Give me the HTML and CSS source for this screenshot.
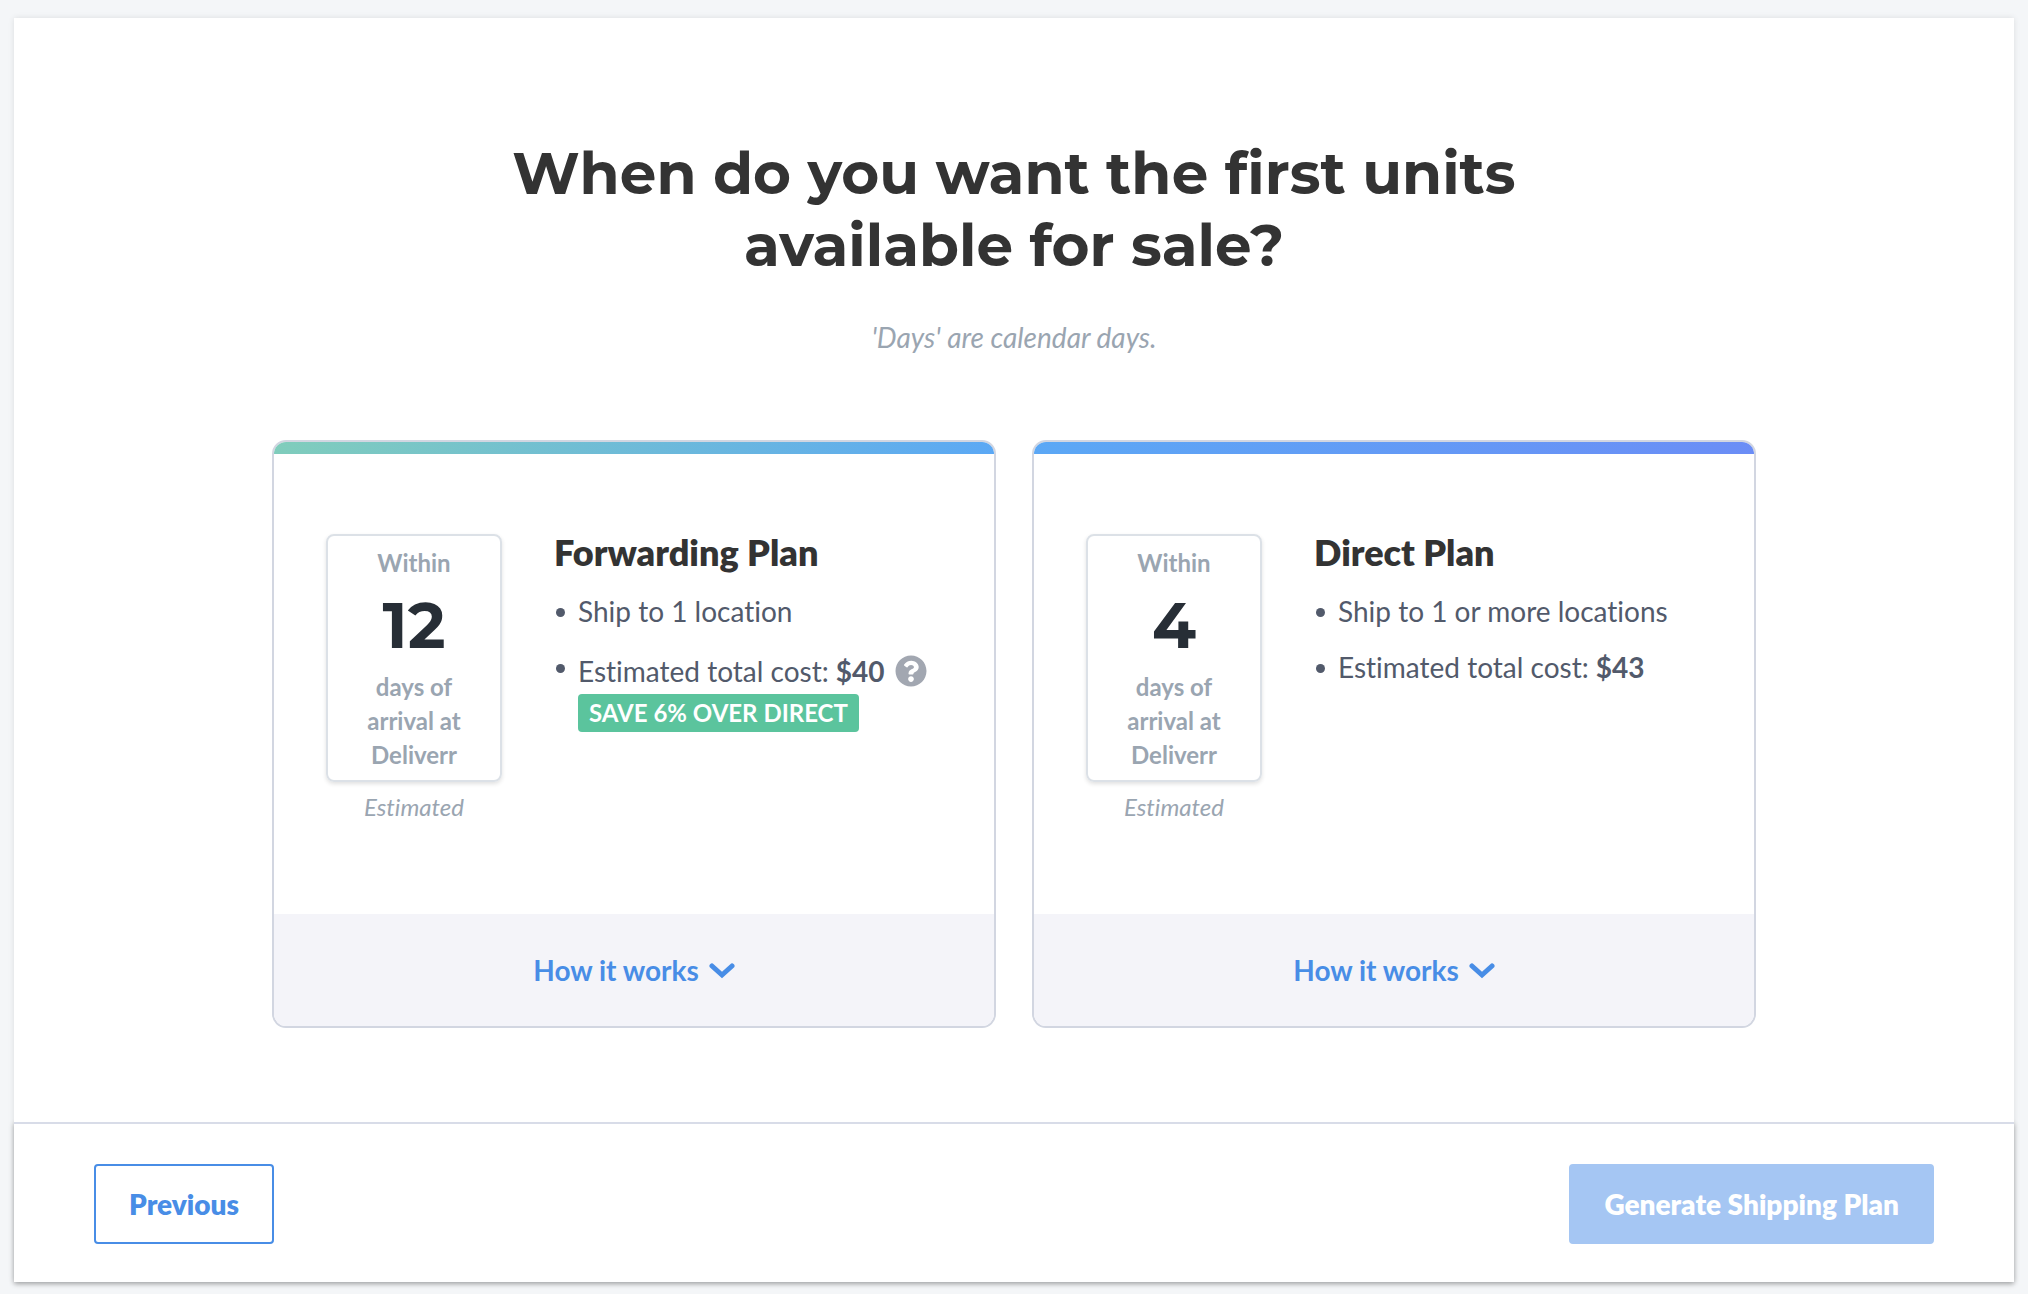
FILE: index.html
```html
<!DOCTYPE html>
<html lang="en">
<head>
  <meta charset="utf-8">
  <meta name="viewport" content="width=device-width, initial-scale=1">
  <title>Choose a shipping plan</title>
  <link rel="stylesheet" href="styles.css">
</head>
<body>
  <div class="panel">
    <main class="content">
      <h1 class="heading">When do you want the first units available for sale?</h1>
      <p class="subheading">'Days' are calendar days.</p>

      <div class="plans">
        <article class="plan plan--forwarding">
          <div class="plan__body">
            <div class="arrival">
              <div class="arrival__box">
                <span>Within</span>
                <strong class="arrival__days">12</strong>
                <span>days of arrival at Deliverr</span>
              </div>
              <em class="arrival__note">Estimated</em>
            </div>
            <div class="details">
              <h2 class="details__title">Forwarding Plan</h2>
              <ul class="details__list">
                <li>Ship to 1 location</li>
                <li>
                  <div>
                    <div class="cost">
                      <span>Estimated total cost: <b>$40</b></span>
                      <button class="help" type="button" aria-label="About this cost">
                        <svg viewBox="0 0 512 512" width="32" height="32" aria-hidden="true"><path fill="currentColor" d="M504 256c0 136.997-111.043 248-248 248S8 392.997 8 256C8 119.083 119.043 8 256 8s248 111.083 248 248zM262.655 90c-54.497 0-89.255 22.957-116.549 63.758-3.536 5.286-2.353 12.415 2.715 16.258l34.699 26.31c5.205 3.947 12.621 3.008 16.665-2.122 17.864-22.658 30.113-35.797 57.303-35.797 20.429 0 45.698 13.148 45.698 32.958 0 14.976-12.363 22.667-32.534 33.976C247.128 238.528 216 254.941 216 296v4c0 6.627 5.373 12 12 12h56c6.627 0 12-5.373 12-12v-1.333c0-28.462 83.186-29.647 83.186-106.667 0-58.002-60.165-102-116.531-102zM256 338c-25.365 0-46 20.635-46 46 0 25.364 20.635 46 46 46s46-20.636 46-46c0-25.365-20.635-46-46-46z"/></svg>
                      </button>
                    </div>
                    <span class="badge">SAVE 6% OVER DIRECT</span>
                  </div>
                </li>
              </ul>
            </div>
          </div>
          <button class="plan__toggle" type="button" aria-expanded="false">
            How it works
            <svg viewBox="0 0 26 24" width="26" height="24" aria-hidden="true"><path d="M3 8l10 9 10-9" fill="none" stroke="currentColor" stroke-width="5" stroke-linecap="round" stroke-linejoin="miter"/></svg>
          </button>
        </article>

        <article class="plan plan--direct">
          <div class="plan__body">
            <div class="arrival">
              <div class="arrival__box">
                <span>Within</span>
                <strong class="arrival__days">4</strong>
                <span>days of arrival at Deliverr</span>
              </div>
              <em class="arrival__note">Estimated</em>
            </div>
            <div class="details">
              <h2 class="details__title">Direct Plan</h2>
              <ul class="details__list">
                <li>Ship to 1 or more locations</li>
                <li><span>Estimated total cost: <b>$43</b></span></li>
              </ul>
            </div>
          </div>
          <button class="plan__toggle" type="button" aria-expanded="false">
            How it works
            <svg viewBox="0 0 26 24" width="26" height="24" aria-hidden="true"><path d="M3 8l10 9 10-9" fill="none" stroke="currentColor" stroke-width="5" stroke-linecap="round" stroke-linejoin="miter"/></svg>
          </button>
        </article>
      </div>
    </main>

    <footer class="actions">
      <button class="button button--outline" type="button">Previous</button>
      <button class="button button--primary" type="button" disabled>Generate Shipping Plan</button>
    </footer>
  </div>
</body>
</html>
```
FILE: styles.css
```css
*,
*::before {
  box-sizing: border-box;
}

body {
  margin: 0;
  min-height: 100vh;
  display: flex;
  padding: 18px 14px 12px;
  background: #f4f6f8;
  color: #525a6b;
  font: 28px/36px Lato, sans-serif;
  font-variant-ligatures: none;
}

h1,
h2,
p,
ul {
  margin: 0;
  padding: 0;
}

button {
  margin: 0;
  font-family: inherit;
  cursor: pointer;
}

.panel {
  flex: 1;
  display: flex;
  flex-direction: column;
  background: #fff;
  box-shadow: 0 0 6px rgba(0, 0, 0, 0.1);
}

.content {
  position: relative;
  z-index: 1;
  flex: 1;
  padding: 120px 80px 90px;
  background: #fff;
}

.heading {
  max-width: 1100px;
  margin: 0 auto 36px;
  color: #333;
  font-family: Montserrat, Inter, sans-serif;
  font-size: 58px;
  font-weight: 700;
  line-height: 72px;
  text-align: center;
}

.subheading {
  margin-bottom: 84px;
  color: #9aa5b1;
  font-style: italic;
  line-height: 38px;
  text-align: center;
}

.plans {
  display: grid;
  grid-template-columns: 1fr 1fr;
  gap: 36px;
  max-width: 1484px;
  margin: 0 auto;
}

.plan {
  display: flex;
  flex-direction: column;
  overflow: hidden;
  border: 2px solid #d2d6e1;
  border-radius: 14px;
}

.plan::before {
  content: "";
  height: 12px;
}

.plan--forwarding::before {
  background: linear-gradient(135deg, #80cdbb, #5ba8f5);
}

.plan--direct::before {
  background: linear-gradient(135deg, #5ba8f5, #6b8df6);
}

.plan__body {
  flex: 1;
  display: flex;
  gap: 52px;
  padding: 80px 52px 90px;
}

.arrival {
  flex: none;
  display: flex;
  flex-direction: column;
  gap: 8px;
  width: 176px;
  color: #9aa5b1;
  font-size: 24px;
  line-height: 34px;
  text-align: center;
}

.arrival__box {
  display: flex;
  flex-direction: column;
  padding: 10px 24px 8px;
  border: 2px solid #dce1e7;
  border-radius: 8px;
  box-shadow: 0 2px 4px rgba(0, 0, 0, 0.12);
  font-weight: 700;
}

.arrival__days {
  color: #272e36;
  font-family: Montserrat, Inter, sans-serif;
  font-size: 64px;
  font-weight: 700;
  line-height: 90px;
}

.details__title {
  margin-bottom: 23px;
  color: #333;
  font-size: 36px;
  font-weight: 800;
  line-height: 36px;
}

.details__list {
  display: grid;
  gap: 20px;
  list-style: none;
}

.details__list li {
  display: flex;
  gap: 13px;
}

.details__list li::before {
  content: "";
  flex: none;
  width: 9px;
  height: 9px;
  margin: 15px 0 0 2px;
  border-radius: 50%;
  background: currentColor;
}

.cost {
  display: flex;
  align-items: center;
  gap: 10px;
  height: 44px;
}

.help {
  display: flex;
  padding: 0;
  border: 0;
  background: none;
  color: #a2a7b1;
}

.badge {
  display: inline-block;
  padding: 0 11px;
  border-radius: 4px;
  background: #5bc49d;
  color: #fff;
  font-size: 24px;
  font-weight: 700;
  line-height: 38px;
}

.plan__toggle {
  display: flex;
  align-items: center;
  justify-content: center;
  gap: 10px;
  padding: 38px 0;
  border: 0;
  background: #f4f4f9;
  color: #488de6;
  font-size: 28px;
  font-weight: 700;
  line-height: 36px;
}

.actions {
  display: flex;
  align-items: center;
  justify-content: space-between;
  padding: 40px 80px 38px;
  border-top: 2px solid #d8dce8;
  box-shadow: 0 2px 5px rgba(0, 0, 0, 0.3);
}

.button {
  padding: 20px 33px;
  border: 2px solid #488de6;
  border-radius: 4px;
  background: #fff;
  color: #488de6;
  font-size: 28px;
  font-weight: 800;
  line-height: 36px;
}

.button--primary {
  border-color: #a5c6f3;
  background: #a5c6f3;
  color: #fff;
  cursor: default;
}
```
